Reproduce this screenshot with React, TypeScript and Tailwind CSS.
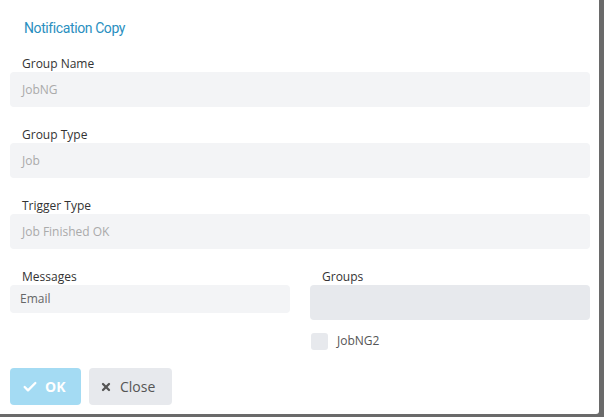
import { Check, X } from 'lucide-react';

const fields = [
  { label: 'Group Name', value: 'JobNG' },
  { label: 'Group Type', value: 'Job' },
  { label: 'Trigger Type', value: 'Job Finished OK' },
];

const App = () => {
  return (
    <div className="w-[604px] h-[417px] bg-[#6a6a6a] overflow-hidden font-['Open_Sans',sans-serif]">
      <div className="w-[599px] h-[414px] bg-white rounded-br-[3px] pl-[10px] pr-[9px]">
        {/* Title */}
        <div className="pt-[18px] pl-[14px] h-[38px] text-[14px] leading-[20px] text-[#2a8fc0] font-['Roboto',sans-serif] tracking-[-0.4px]">
          Notification Copy
        </div>

        {/* Read-only fields */}
        <div className="mt-[18px] flex flex-col gap-[20px]">
          {fields.map((field) => (
            <div key={field.label}>
              <div className="pl-[12px] h-[16px] text-[12px] leading-[16px] text-[#333]">
                {field.label}
              </div>
              <div className="h-[35px] rounded-[4px] bg-[#f3f4f6] pl-[12px] flex items-center text-[12px] text-[#aaa]">
                {field.value}
              </div>
            </div>
          ))}
        </div>

        {/* Messages / Groups */}
        <div className="mt-[20px] grid grid-cols-2 gap-[20px]">
          <div>
            <div className="pl-[12px] h-[16px] text-[12px] leading-[16px] text-[#333]">
              Messages
            </div>
            <div className="h-[28px] rounded-[4px] bg-[#f3f4f6] pl-[10px] flex items-center text-[12px] text-[#666]">
              Email
            </div>
          </div>
          <div>
            <div className="pl-[12px] h-[16px] text-[12px] leading-[16px] text-[#333]">
              Groups
            </div>
            <div className="h-[35px] rounded-[4px] bg-[#e7e9ed]" />
            <div className="mt-[12px] flex items-center gap-[9px] pl-px">
              <div className="w-[17px] h-[17px] rounded-[3px] bg-[#e7e9ed]" />
              <span className="text-[12px] text-[#555]">JobNG2</span>
            </div>
          </div>
        </div>

        {/* Actions */}
        <div className="mt-[18px] flex gap-[8px]">
          <button className="w-[71px] h-[37px] rounded-[4px] bg-[#a4dbf3] text-white flex items-center pl-[12px] gap-[7px] text-[14px] font-bold">
            <Check size={16} strokeWidth={3.5} />
            OK
          </button>
          <button className="w-[83px] h-[37px] rounded-[4px] bg-[#e7e9ed] text-[#555] flex items-center pl-[11px] gap-[8px] text-[14px]">
            <X size={12} strokeWidth={4.5} />
            Close
          </button>
        </div>
      </div>
    </div>
  );
};

export default App;
